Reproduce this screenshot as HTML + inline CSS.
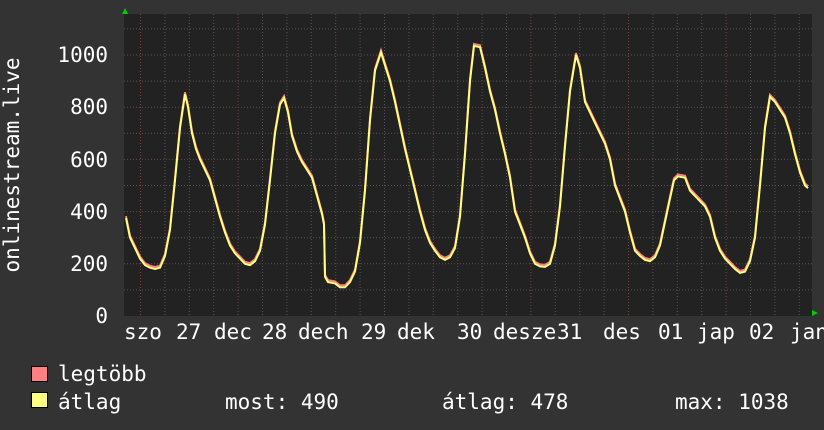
<!DOCTYPE html>
<html><head><meta charset="utf-8"><style>
html,body{margin:0;padding:0;background:#333333;width:824px;height:430px;overflow:hidden}
svg text{font-family:"DejaVu Sans Mono","Liberation Mono",monospace;fill:#fff;font-size:21px}
</style></head><body>
<svg id="g" width="824" height="430" xmlns="http://www.w3.org/2000/svg">
<rect x="0" y="0" width="824" height="430" fill="#333333"/>
<rect x="124" y="14" width="688" height="302" fill="#222222"/>
<g id="grid"></g>
<g text-anchor="end">
<text x="108" y="323">0</text>
<text x="108" y="271">200</text>
<text x="108" y="219">400</text>
<text x="108" y="167">600</text>
<text x="108" y="114">800</text>
<text x="108" y="62">1000</text>
</g>
<text transform="translate(19,165) rotate(-90)" text-anchor="middle">onlinestream.live</text>
<g>
<text x="124" y="339">szo</text><text x="176" y="339">27</text><text x="214" y="339">dec</text>
<text x="262" y="339">28</text><text x="298" y="339">dech</text>
<text x="361" y="339">29</text><text x="397" y="339">dek</text>
<text x="457" y="339">30</text><text x="493" y="339">desze</text>
<text x="557" y="339">31</text><text x="603" y="339">des</text>
<text x="658" y="339">01</text><text x="697" y="339">jap</text>
<text x="749" y="339">02</text><text x="790" y="339">jan</text>
</g>
<path id="pk" fill="none" stroke="#ff8080" stroke-width="2"/>
<path id="yl" fill="none" stroke="#ffff80" stroke-width="2"/>
<polygon points="122,14 128,14 125,8" fill="#00cc00"/>
<polygon points="812,310 812,316 818,313" fill="#00cc00"/>
<rect x="31.5" y="366.5" width="16" height="15" fill="#ff8080" stroke="#000"/>
<rect x="31.5" y="392.5" width="16" height="15" fill="#ffff80" stroke="#000"/>
<text x="58" y="381">legtöbb</text>
<text x="58" y="409">átlag</text>
<text x="225" y="409">most: 490</text>
<text x="442" y="409">átlag: 478</text>
<text x="675" y="409">max: 1038</text>
</svg>
<script>
var d=[126,375,130,300,135,260,140,220,145,195,150,185,155,180,160,185,165,230,170,330,175,520,180,720,185,850,188,800,192,700,196,640,200,600,205,560,210,520,215,450,220,380,225,320,230,270,235,240,240,220,245,200,250,195,255,210,260,250,265,350,270,520,275,700,280,810,284,835,288,780,292,690,297,630,302,590,307,560,312,530,317,460,322,390,324,350,325,150,328,130,335,125,340,110,345,110,350,130,355,170,360,280,365,480,370,750,375,940,381,1010,385,960,390,900,395,820,400,730,405,640,410,560,415,480,420,400,425,330,430,280,435,250,440,225,445,215,450,225,455,260,460,380,465,620,470,900,474,1035,480,1030,485,950,490,860,495,790,500,700,505,620,510,530,515,400,520,350,525,300,530,240,535,200,540,190,545,188,550,200,555,270,560,420,565,650,570,860,576,1000,580,950,585,820,590,780,595,740,600,700,605,660,610,600,615,500,620,450,625,400,630,320,635,250,640,230,645,215,650,210,655,225,660,270,665,360,670,450,674,520,678,535,685,530,690,480,695,460,700,440,705,420,710,380,715,300,720,250,725,220,730,200,735,180,740,165,745,170,750,210,755,300,760,500,765,720,770,840,775,820,780,790,785,760,790,700,795,620,800,550,805,500,808,490];
function p(o){var s='';for(var i=0;i<d.length;i+=2){s+=(i?'L':'M')+d[i]+','+(316-d[i+1]*0.261-o).toFixed(1);}return s;}
document.getElementById('pk').setAttribute('d',p(2));
document.getElementById('yl').setAttribute('d',p(0));
var g='';
for(var x=140.5;x<812;x+=24.4){var maj=Math.abs(((x-140.5)/97.6)-Math.round((x-140.5)/97.6))<0.05;
g+='<line x1="'+x.toFixed(1)+'" y1="14" x2="'+x.toFixed(1)+'" y2="316" stroke="'+(maj?'#7a4444':'#555')+'" stroke-dasharray="1,2"/>';}
for(var v=100;v<=1100;v+=100){var y=(316-v*0.261).toFixed(1);g+='<line x1="124" y1="'+y+'" x2="812" y2="'+y+'" stroke="'+(v%200==0?'#6a4a4a':'#555')+'" stroke-dasharray="1,2"/>';}
document.getElementById('grid').innerHTML=g;
</script>
</body></html>
